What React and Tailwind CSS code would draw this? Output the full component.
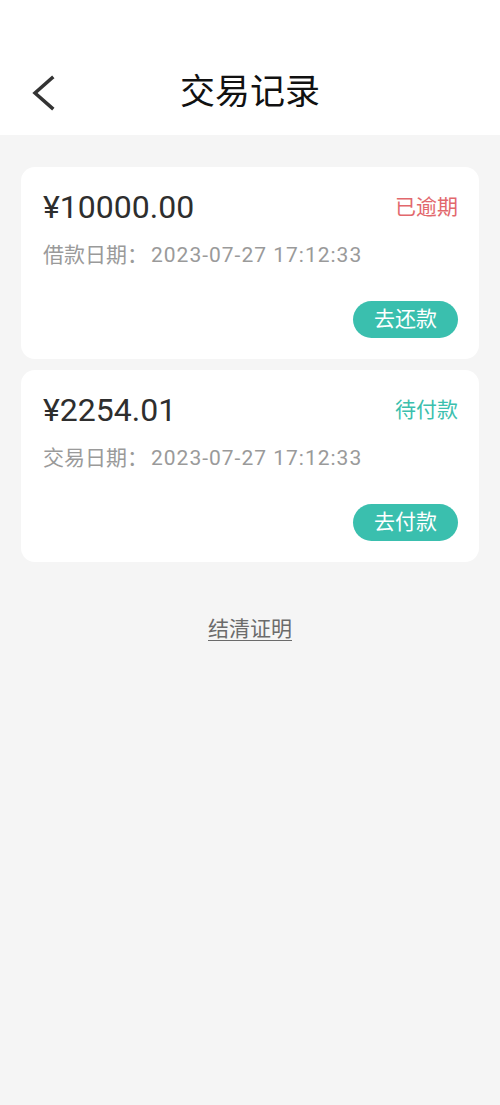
const records = [
  {
    amount: '¥10000.00',
    status: '已逾期',
    statusClass: 'text-[#e2686d]',
    dateLabel: '借款日期',
    date: '2023-07-27 17:12:33',
    action: '去还款'
  },
  {
    amount: '¥2254.01',
    status: '待付款',
    statusClass: 'text-[#3cbfae]',
    dateLabel: '交易日期',
    date: '2023-07-27 17:12:33',
    action: '去付款'
  }
]

function RecordCard({ record }) {
  return (
    <div className="bg-white rounded-[14px] pl-[22px] pr-[21px] pt-[20px] pb-[21px] flex flex-col">
      <div className="flex items-center justify-between h-[40px]">
        <span className="text-[32px] text-[#2e2e2e] leading-none">{record.amount}</span>
        <span className={`text-[21px] leading-none ${record.statusClass}`}>{record.status}</span>
      </div>
      <div className="mt-[14px] h-[28px] flex items-center text-[21px] text-[#9a9a9a] leading-none">
        <span>{record.dateLabel}：</span>
        <span className="tracking-[1px] pl-[3px]">{record.date}</span>
      </div>
      <div className="mt-[32px] flex justify-end">
        <button className="h-[37px] w-[105px] rounded-full bg-[#3abfae] text-white text-[21px] leading-none flex items-center justify-center">
          {record.action}
        </button>
      </div>
    </div>
  )
}

export default function App() {
  return (
    <div
      className="w-[500px] min-h-[1105px] bg-[#f5f5f5] flex flex-col"
      style={{ fontFamily: 'Roboto, "Noto Sans CJK SC", sans-serif' }}
    >
      <header className="bg-white h-[135px] pt-[50px] flex">
        <div className="relative flex-1 h-[85px] flex items-center justify-center">
          <button className="absolute left-[26px] top-[25px] w-[34px] h-[36px] flex items-center justify-center">
            <svg width="28" height="36" viewBox="0 0 28 36" fill="none">
              <path d="M23 3 L6 18 L23 33" stroke="#333" strokeWidth="3.5" strokeLinecap="square" strokeLinejoin="miter" />
            </svg>
          </button>
          <h1 className="text-[35px] text-[#111] leading-none">交易记录</h1>
        </div>
      </header>

      <main className="px-[21px] pt-[32px] flex flex-col gap-[11px]">
        {records.map((r) => (
          <RecordCard key={r.amount} record={r} />
        ))}
      </main>

      <div className="mt-[57px] flex justify-center">
        <span className="text-[21px] text-[#6b6b6b] underline decoration-1 underline-offset-4 leading-none">结清证明</span>
      </div>
    </div>
  )
}
